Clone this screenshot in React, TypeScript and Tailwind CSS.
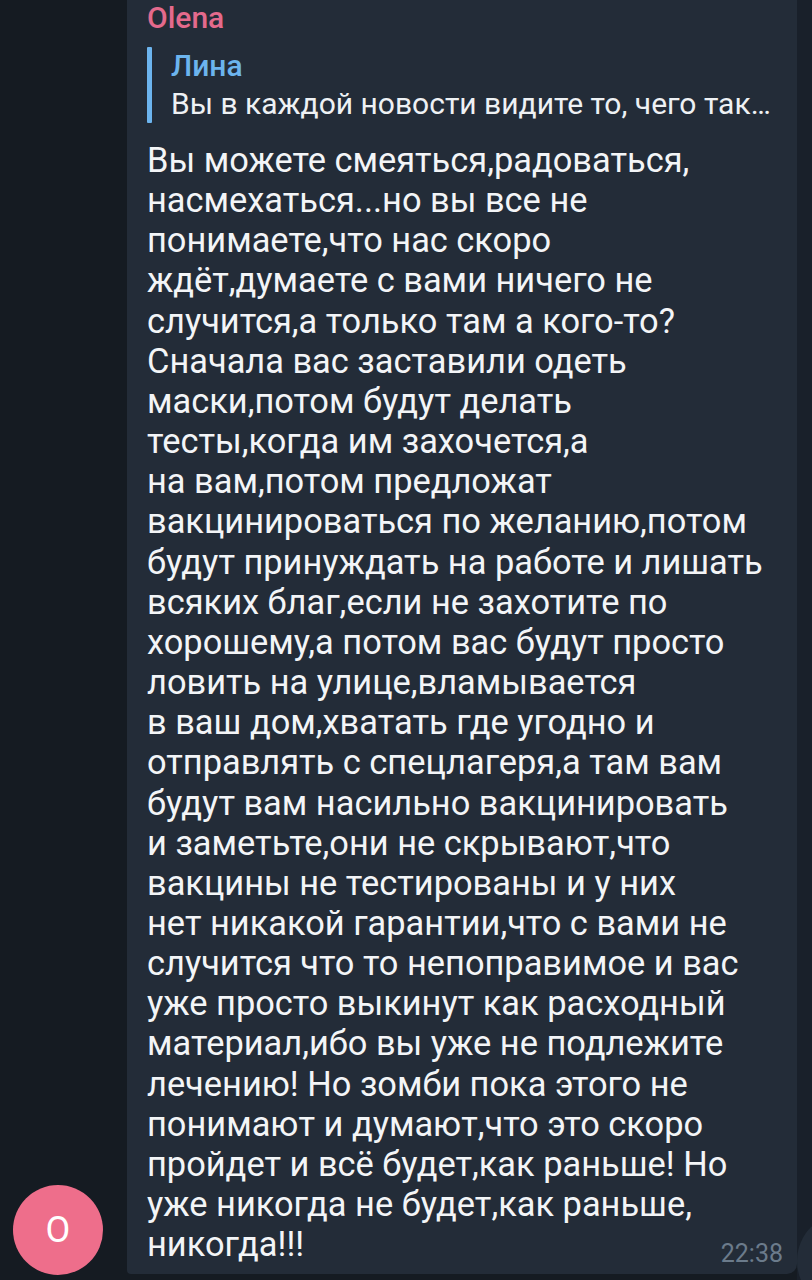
import React from "react";

const lines = [
  "Вы можете смеяться,радоваться,",
  "насмехаться...но вы все не",
  "понимаете,что нас скоро",
  "ждёт,думаете с вами ничего не",
  "случится,а только там а кого-то?",
  "Сначала вас заставили одеть",
  "маски,потом будут делать",
  "тесты,когда им захочется,а",
  "на вам,потом предложат",
  "вакцинироваться по желанию,потом",
  "будут принуждать на работе и лишать",
  "всяких благ,если не захотите по",
  "хорошему,а потом вас будут просто",
  "ловить на улице,вламывается",
  "в ваш дом,хватать где угодно и",
  "отправлять с спецлагеря,а там вам",
  "будут вам насильно вакцинировать",
  "и заметьте,они не скрывают,что",
  "вакцины не тестированы и у них",
  "нет никакой гарантии,что с вами не",
  "случится что то непоправимое и вас",
  "уже просто выкинут как расходный",
  "материал,ибо вы уже не подлежите",
  "лечению! Но зомби пока этого не",
  "понимают и думают,что это скоро",
  "пройдет и всё будет,как раньше! Но",
  "уже никогда не будет,как раньше,",
  "никогда!!!",
];

export default function App() {
  return (
    <div className="relative w-[812px] h-[1280px] overflow-hidden bg-[#151b22] font-['Roboto',sans-serif] flex">
      <div className="w-[127px] shrink-0 flex flex-col justify-end pl-[13px] pb-[5px]">
        <div className="w-[90px] h-[90px] rounded-full bg-[#ee6e8b] flex items-center justify-center text-white text-[36px]">
          O
        </div>
      </div>

      <div className="relative w-[670px] h-[1274px] shrink-0 bg-[#232c38] rounded-b-[10px] rounded-bl-[4px] pl-[20px] pr-[12px]">
        <div className="text-[30px] leading-[36px] font-medium text-[#e46a8c]">Olena</div>

        <div className="mt-[11px] flex">
          <div className="w-[5px] h-[76px] bg-[#6cb4ee] rounded-[1px]" />
          <div className="pl-[19px] text-[30px] leading-[38px] whitespace-nowrap">
            <div className="font-medium text-[#6cb4ee]">Лина</div>
            <div className="text-[#eef1f4]">Вы в каждой новости видите то, чего так…</div>
          </div>
        </div>

        <div className="mt-[17px] text-[34.4px] leading-[40.15px] text-[#f3f5f7] whitespace-nowrap">
          {lines.map((l, i) => (
            <div key={i}>{l}</div>
          ))}
        </div>

        <div className="absolute right-[14px] bottom-[8px] text-[25px] leading-none text-[#6b7b8b]">22:38</div>
      </div>

      <div className="flex-1 bg-[#19202a]" />
      <div className="absolute left-[797px] top-[1213px] w-[96px] h-[96px] rounded-full bg-[#232c38]" />
    </div>
  );
}
